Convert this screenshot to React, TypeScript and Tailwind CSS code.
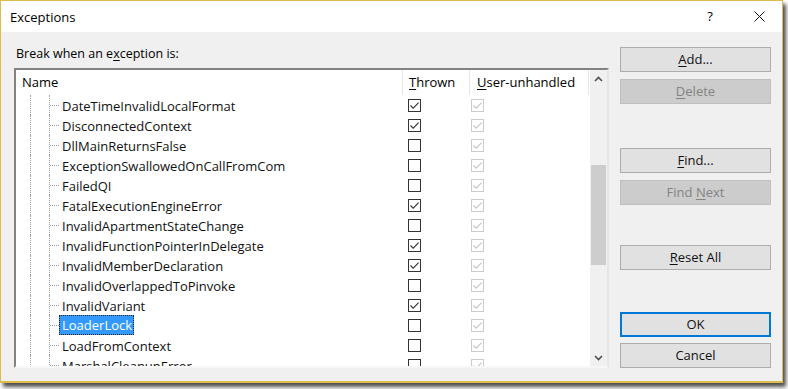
import React from "react";

const rows: [string, boolean][] = [
  ["DateTimeInvalidLocalFormat", true],
  ["DisconnectedContext", true],
  ["DllMainReturnsFalse", false],
  ["ExceptionSwallowedOnCallFromCom", false],
  ["FailedQI", false],
  ["FatalExecutionEngineError", true],
  ["InvalidApartmentStateChange", false],
  ["InvalidFunctionPointerInDelegate", true],
  ["InvalidMemberDeclaration", true],
  ["InvalidOverlappedToPinvoke", false],
  ["InvalidVariant", true],
  ["LoaderLock", false],
  ["LoadFromContext", false],
  ["MarshalCleanupError", false],
];

function Check({ checked, disabled }: { checked: boolean; disabled?: boolean }) {
  return (
    <span
      className={
        disabled
          ? "w-[13px] h-[13px] border border-[#cccccc] bg-white flex items-center justify-center shrink-0"
          : "w-[13px] h-[13px] border border-[#333333] bg-white flex items-center justify-center shrink-0"
      }
    >
      {checked && (
        <svg width="11" height="11" viewBox="0 0 11 11">
          <path
            d="M1.5 5.5 L4.2 8.2 L9.6 2.6"
            fill="none"
            stroke={disabled ? "#c4c4c4" : "#333333"}
            strokeWidth="1.1"
          />
        </svg>
      )}
    </span>
  );
}

function Btn({
  children,
  disabled,
  primary,
  className,
}: {
  children: React.ReactNode;
  disabled?: boolean;
  primary?: boolean;
  className?: string;
}) {
  let cls =
    "w-[151px] h-[25px] flex items-center justify-center text-[13px] leading-none bg-[#e1e1e1] border border-[#adadad] text-[#111111]";
  if (disabled)
    cls =
      "w-[151px] h-[25px] flex items-center justify-center text-[13px] leading-none bg-[#cccccc] border border-[#bfbfbf] text-[#838383]";
  if (primary)
    cls =
      "w-[151px] h-[25px] flex items-center justify-center text-[13px] leading-none bg-[#e1e1e1] border-2 border-[#0078d7] text-[#111111]";
  return <div className={cls + " " + (className ?? "")}>{children}</div>;
}

function Chevron({ up }: { up?: boolean }) {
  return (
    <svg width="9" height="6" viewBox="0 0 9 6">
      <path
        d={up ? "M1 5 L4.5 1.5 L8 5" : "M1 1 L4.5 4.5 L8 1"}
        fill="none"
        stroke="#505050"
        strokeWidth="1.6"
      />
    </svg>
  );
}

export default function App() {
  return (
    <div
      className="w-[788px] h-[389px] bg-white overflow-hidden"
      style={{ fontFamily: '"Open Sans", "Noto Sans", sans-serif' }}
    >
      <div className="w-[783px] h-[383px] border border-[#dfbb4c] border-b-2 bg-[#f0f0f0] flex flex-col shadow-[3px_4px_4px_rgba(0,0,0,0.7)]">
        {/* Title bar */}
        <div className="h-[31px] bg-white flex items-center shrink-0">
          <span className="pl-[9px] pt-[1px] text-[13px] leading-none text-black">Exceptions</span>
          <div className="flex-1" />
          <span className="w-[46px] mr-[3px] text-center text-[13px] leading-none text-black">?</span>
          <span className="w-[46px] flex items-center justify-center">
            <svg width="11" height="11" viewBox="0 0 11 11">
              <path d="M0.5 0.5 L10.5 10.5 M10.5 0.5 L0.5 10.5" stroke="#111111" strokeWidth="1" fill="none" />
            </svg>
          </span>
        </div>

        {/* Body */}
        <div className="flex flex-1 pl-[13px]">
          {/* Left column */}
          <div className="w-[595px] flex flex-col">
            <div className="pt-[13px] h-[29px] leading-[17px] text-[12.5px] pl-[2px] text-black">
              Break when an e<u className="underline-offset-2">x</u>ception is:
            </div>
            <div className="mt-[7px] h-[300px] border-2 border-t-[#828282] border-l-[#828282] border-r-[#e6e6e6] border-b-[#f7f7f7] bg-white flex">
              {/* List area */}
              <div className="w-[574px] flex flex-col overflow-hidden">
                {/* Header */}
                <div className="h-[25px] flex shrink-0 text-[13px] text-black">
                  <div className="w-[386px] flex items-center pl-[6px] pt-[1px]">Name</div>
                  <div className="w-[67px] border-l border-[#e5e5e5] flex items-center pl-[6px] pt-[1px]">
                    <span>
                      <u className="underline-offset-2">T</u>hrown
                    </span>
                  </div>
                  <div className="w-[119px] border-l border-[#e5e5e5] flex items-center pl-[7px] pt-[1px]">
                    <span>
                      <u className="underline-offset-2">U</u>ser-unhandled
                    </span>
                  </div>
                  <div className="w-[2px] border-l border-[#e5e5e5]" />
                </div>
                {/* Rows */}
                <div className="flex-1 overflow-hidden">
                  {rows.map(([name, thrown]) => {
                    const sel = name === "LoaderLock";
                    return (
                      <div key={name} className="h-[20px] flex shrink-0">
                        <div className="w-[386px] h-full flex items-center">
                          <div className="w-[14px] h-full" />
                          <div className="w-[19px] h-full border-l border-dotted border-[#a0a0a0]" />
                          <div className="w-[1px] h-full border-l border-dotted border-[#a0a0a0]" />
                          <div className="w-[9px] h-0 border-t border-dotted border-[#a0a0a0]" />
                          {sel ? (
                            <span className="h-full flex items-center pl-[2px] pr-[1px] pt-[1px] bg-[#3399ff] border border-dotted border-[#222222] text-white text-[13px] leading-none">
                              {name}
                            </span>
                          ) : (
                            <span className="h-full flex items-center pl-[3px] pt-[2px] text-[13px] leading-none text-[#111111]">
                              {name}
                            </span>
                          )}
                        </div>
                        <div className="w-[67px] h-full flex items-center pl-[6px]">
                          <Check checked={thrown} />
                        </div>
                        <div className="w-[119px] h-full flex items-center pl-[2px]">
                          <Check checked disabled />
                        </div>
                      </div>
                    );
                  })}
                </div>
              </div>
              {/* Scrollbar */}
              <div className="w-[17px] bg-[#f0f0f0] flex flex-col">
                <div className="h-[17px] flex items-center justify-center shrink-0">
                  <Chevron up />
                </div>
                <div className="flex-1">
                  <div className="mt-[78px] mx-[1px] h-[100px] bg-[#cdcdcd]" />
                </div>
                <div className="h-[17px] flex items-center justify-center shrink-0">
                  <Chevron />
                </div>
              </div>
            </div>
          </div>

          {/* Right column */}
          <div className="ml-[11px] flex flex-col">
            <Btn className="mt-[15px]">
              <span>
                <u className="underline-offset-2">A</u>dd...
              </span>
            </Btn>
            <Btn disabled className="mt-[7px]">
              <span>
                <u className="underline-offset-2">D</u>elete
              </span>
            </Btn>
            <Btn className="mt-[44px]">
              <span>
                <u className="underline-offset-2">F</u>ind...
              </span>
            </Btn>
            <Btn disabled className="mt-[7px]">
              <span>
                Find <u className="underline-offset-2">N</u>ext
              </span>
            </Btn>
            <Btn className="mt-[40px]">
              <span>
                <u className="underline-offset-2">R</u>eset All
              </span>
            </Btn>
            <Btn primary className="mt-[42px]">
              OK
            </Btn>
            <Btn className="mt-[6px]">Cancel</Btn>
          </div>
        </div>
      </div>
    </div>
  );
}
